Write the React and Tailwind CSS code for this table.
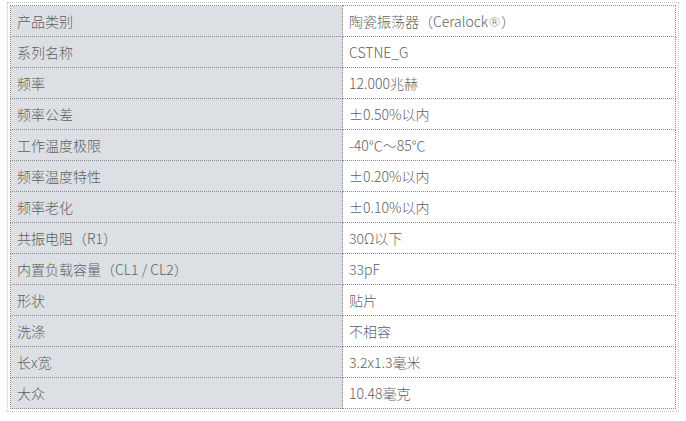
const rows = [
  ['产品类别', <>陶瓷振荡器（Ceralock<span className="font-['DejaVu_Sans'] text-[13px]">®</span>）</>],
  ['系列名称', 'CSTNE_G'],
  ['频率', '12.000兆赫'],
  ['频率公差', '±0.50%以内'],
  ['工作温度极限', '-40℃～85℃'],
  ['频率温度特性', '±0.20%以内'],
  ['频率老化', '±0.10%以内'],
  ['共振电阻（R1）', '30Ω以下'],
  ['内置负载容量（CL1 / CL2）', '33pF'],
  ['形状', '贴片'],
  ['洗涤', '不相容'],
  ['长x宽', '3.2x1.3毫米'],
  ['大众', '10.48毫克'],
];

export default function App() {
  return (
    <div
      className="w-[686px] h-[421px] bg-white pt-[2px] pl-[7px]"
      style={{ fontFamily: '"Noto Sans CJK SC", "Noto Sans", sans-serif' }}
    >
      <div className="w-[672px] p-[2px] border border-dotted border-[#c8c8c8]">
        <table className="w-[666px] border-collapse text-[14px] font-light text-[#5f5f5f]">
          <tbody>
            {rows.map(([label, value]) => (
              <tr key={label} className="h-[31px]">
                <td className="w-[332px] bg-[#dcdfe3] border border-dotted border-[#8a8a8a] pl-[6px] pr-[5px] py-0 leading-none">
                  {label}
                </td>
                <td className="border border-dotted border-[#8a8a8a] px-[6px] py-0 leading-none">
                  {value}
                </td>
              </tr>
            ))}
          </tbody>
        </table>
      </div>
    </div>
  );
}
